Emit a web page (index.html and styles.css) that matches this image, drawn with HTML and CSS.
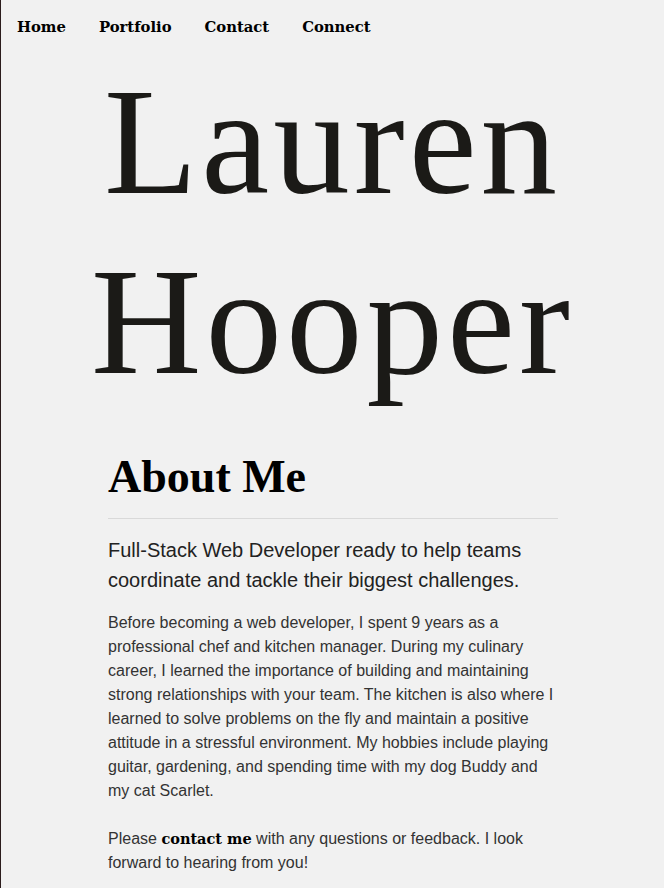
FILE: index.html
```html
<!DOCTYPE html>
<html lang="en">
<head>
<meta charset="utf-8">
<title>Lauren Hooper</title>
<link rel="stylesheet" href="styles.css">
</head>
<body>
<nav class="nav">
  <a class="nav-link" href="#">Home</a>
  <a class="nav-link" href="#">Portfolio</a>
  <a class="nav-link" href="#">Contact</a>
  <a class="nav-link" href="#">Connect</a>
</nav>
<header class="hero">
  <h1 class="name">Lauren<br>Hooper</h1>
</header>
<main class="about">
  <h2 class="about-title">About Me</h2>
  <hr class="rule">
  <p class="lead">Full-Stack Web Developer ready to help teams coordinate and tackle their biggest challenges.</p>
  <p class="text">Before becoming a web developer, I spent 9 years as a professional chef and kitchen manager. During my culinary career, I learned the importance of building and maintaining strong relationships with your team. The kitchen is also where I learned to solve problems on the fly and maintain a positive attitude in a stressful environment. My hobbies include playing guitar, gardening, and spending time with my dog Buddy and my cat Scarlet.</p>
  <p class="text">Please <a class="inline-link" href="#">contact me</a> with any questions or feedback. I look forward to hearing from you!</p>
</main>
</body>
</html>
```

FILE: styles.css
```css
html {
  background: #f1f1f1;
}
body {
  margin: 0;
  min-height: 888px;
  background: #f1f1f1;
  border-left: 1px solid #2b1c1c;
  font-family: "Liberation Sans", Arial, sans-serif;
  color: #333;
  overflow: hidden;
}
.nav {
  display: flex;
  gap: 33px;
  padding: 18px 0 0 16px;
  height: 26px;
}
.nav-link {
  font-family: "DejaVu Serif", Georgia, serif;
  font-weight: bold;
  font-size: 14.8px;
  color: #000;
  text-decoration: none;
  line-height: 18px;
}
.hero {
  text-align: center;
  padding-top: 8px;
}
.name {
  margin: 0;
  font-family: "Liberation Serif", Georgia, serif;
  font-weight: normal;
  font-size: 153px;
  line-height: 180px;
  letter-spacing: 4px;
  color: #1b1a17;
}
.about {
  width: 450px;
  margin: 0 auto;
  padding-left: 1px;
}
.about-title {
  margin: 40px 0 0;
  font-family: "Liberation Serif", Georgia, serif;
  font-weight: bold;
  font-size: 46px;
  line-height: 50px;
  color: #000;
}
.rule {
  margin: 16px 0 0;
  border: 0;
  border-top: 1px solid #d9d9d9;
  height: 0;
}
.lead {
  margin: 16px 0 0;
  font-size: 20px;
  line-height: 30px;
  color: #222;
}
.text {
  margin: 16px 0 0;
  font-size: 16px;
  line-height: 24px;
  color: #333;
}
.text + .text {
  margin-top: 24px;
}
.inline-link {
  font-family: "DejaVu Serif", Georgia, serif;
  font-weight: bold;
  font-size: 14.5px;
  color: #000;
  text-decoration: none;
}
```
